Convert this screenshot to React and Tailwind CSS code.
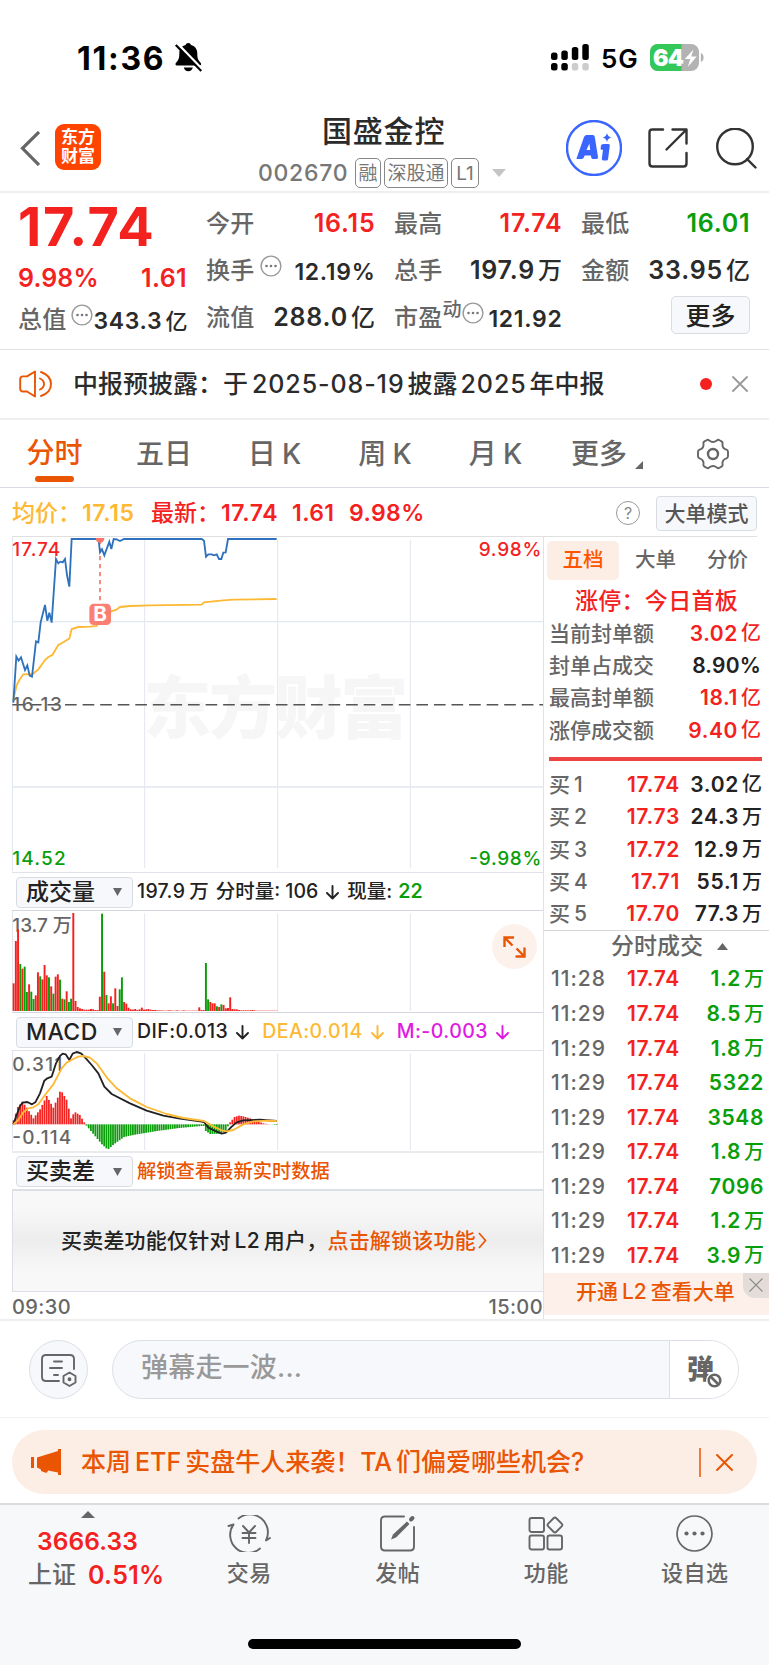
import clsx from 'clsx';

const RED = '#f4221f';
const GREEN = '#0a9e0a';
const GRID = '#e2e6ee';

const price = [
  40, 878, 49, 740, 56, 752, 63, 742, 75, 780, 82, 766, 89, 797, 96, 800, 108, 694, 115, 697, 122, 637, 135, 585,
  142, 632, 148, 608, 155, 638, 168, 447, 175, 460, 181, 455, 188, 457, 195, 447, 201, 495, 208, 530, 215, 387,
  290, 387, 296, 390, 300, 427, 306, 418, 313, 436, 328, 395, 334, 417, 341, 387, 350, 388, 360, 393, 372, 387,
  605, 387, 612, 392, 618, 440, 625, 433, 635, 433, 642, 436, 650, 433, 657, 447, 664, 447, 670, 428, 677, 427,
  684, 387, 830, 387,
];
const average = [
  40, 870, 50, 825, 60, 807, 70, 793, 98, 792, 115, 778, 135, 750, 145, 741, 157, 735, 175, 705, 190, 697,
  197, 692, 208, 686, 215, 657, 235, 651, 270, 650, 290, 648, 300, 625, 330, 605, 348, 600, 360, 591, 390, 588,
  450, 586, 605, 584, 612, 577, 640, 574, 670, 571, 700, 569, 830, 567,
];
const dif = [
  40, 793, 50, 765, 60, 738, 68, 728, 82, 726, 96, 733, 106, 727, 120, 700, 133, 662, 142, 655, 155, 650, 168, 610,
  180, 588, 188, 581, 197, 583, 208, 600, 218, 581, 230, 576, 243, 580, 255, 592, 275, 615, 295, 640, 313, 680,
  335, 702, 390, 730, 440, 752, 490, 767, 540, 776, 600, 784, 612, 786, 625, 803, 650, 815, 665, 821, 678, 818,
  695, 800, 710, 787, 730, 781, 780, 779, 830, 783,
];
const dea = [
  40, 793, 55, 780, 70, 757, 85, 745, 100, 742, 115, 733, 135, 705, 160, 673, 185, 625, 200, 608, 220, 597, 235, 590,
  250, 588, 270, 593, 290, 610, 320, 652, 350, 685, 390, 715, 440, 741, 500, 762, 550, 774, 612, 783, 640, 799,
  665, 811, 680, 814, 700, 810, 730, 793, 760, 784, 800, 782, 830, 783,
];

// positive = up minute, negative = down minute
const volume = [
  83, 210, 245, -141, 127, -133, -57, 80, -58, -36, 47, 116, -104, 95, 138, 107, -101, 74, -52, 103, 110, -94, 37, -35,
  59, -27, -37, 294, 30, 12, 8, 6, 4, 4, 4, 6, 5, 3, 3, 43, -292, 118, -48, 23, 44, -23, 68, 15, -65, -101, 27, 22, 10,
  5, 4, 6, 3, 5, 10, 4, 5, 6, 4, 3, 3, 2, 2, 2, 1, 1, 2, 2, 1, 1, 2, 1, 1, 2, 1, 1, 1, 1, 1, 1, 11, 3, 3, -144, -35,
  27, 23, 23, -14, 12, -20, 18, 8, 9, 41, 6, 5, 5, 3, 2, 2, 2, 2, 2, 3, 2, 1, 1, 1, 1, 1, 1, 1, 1, 1, 1,
];

const histKeys = [
  [0, 12], [2, 52], [4, 68], [6, 50], [9, 18], [12, 45], [15, 85], [18, 50], [20, 80], [21, 98], [22, 96], [24, 74],
  [25, 47], [26, 18], [27, 30], [28, 36], [30, 28], [32, 6], [33, -4], [35, -20], [40, -60], [42, -72], [43, -74],
  [45, -62], [50, -38], [55, -31], [65, -20], [75, -11], [85, -5], [86, -5], [87, -20], [89, -29], [93, -28], [96, -20],
  [97, -6], [98, 6], [100, 22], [102, 26], [104, 24], [107, 18], [110, 10], [113, 3], [115, 1], [119, -2],
];
const hist = Array.from({ length: 120 }, (_, i) => {
  const n = Math.max(1, histKeys.findIndex(([k]) => k >= i));
  const [x0, y0] = histKeys[n - 1];
  const [x1, y1] = histKeys[n];
  return y0 + ((y1 - y0) * (i - x0)) / (x1 - x0);
});

const levels = [
  ['1', '17.74', '3.02', '亿'],
  ['2', '17.73', '24.3', '万'],
  ['3', '17.72', '12.9', '万'],
  ['4', '17.71', '55.1', '万'],
  ['5', '17.70', '77.3', '万'],
];
const trades = [
  ['11:28', '1.2', '万'],
  ['11:29', '8.5', '万'],
  ['11:29', '1.8', '万'],
  ['11:29', '5322', ''],
  ['11:29', '3548', ''],
  ['11:29', '1.8', '万'],
  ['11:29', '7096', ''],
  ['11:29', '1.2', '万'],
  ['11:29', '3.9', '万'],
];
const limits = [
  ['当前封单额', '3.02', '亿', true],
  ['封单占成交', '8.90%', '', false],
  ['最高封单额', '18.1', '亿', true],
  ['涨停成交额', '9.40', '亿', true],
];

const Close = ({ size, color, width = 1.8 }) => (
  <svg width={size} height={size} viewBox="0 0 16 16" stroke={color} strokeWidth={width} strokeLinecap="round">
    <path d="M1 1l14 14M15 1L1 15" />
  </svg>
);

const Dots = ({ className }) => (
  <svg className={clsx('shrink-0', className)} width="22" height="22" viewBox="0 0 22 22">
    <circle cx="11" cy="11" r="9.9" fill="none" stroke="#999" strokeWidth="1.4" />
    <circle cx="6.5" cy="11" r="1.3" fill="#777" />
    <circle cx="11" cy="11" r="1.3" fill="#777" />
    <circle cx="15.5" cy="11" r="1.3" fill="#777" />
  </svg>
);

const Stat = ({ label, value, unit, color = 'text-[#2b2b2b]', children, small }) => (
  <div className="flex h-[47px] items-center justify-between">
    <div className="flex items-center text-2xl/none tracking-[0.2px] whitespace-nowrap text-[#666]">
      {label}
      {children}
    </div>
    <div
      className={clsx(
        'flex items-center gap-[3px] whitespace-nowrap',
        color,
        small ? 'pt-[3px] text-[23px]/none tracking-[0.7px]' : 'text-[25px]/none tracking-[0.8px]',
      )}
    >
      <span className={clsx('font-semibold', unit ? '' : 'mr-[-0.5px]')}>{value}</span>
      {unit && <span className={clsx('tracking-normal', small ? 'text-[22px]/none' : 'text-[24px]/none')}>{unit}</span>}
    </div>
  </div>
);

function StatusBar() {
  return (
    <div className="flex h-[108px] pt-[41px] text-black">
      <div className="mt-0.5 ml-[77px] flex h-8 w-[98px] items-center text-[32px]/none font-bold tracking-[1.7px]">11:36</div>
      <svg className="mt-0.5" width="27" height="29" viewBox="0 0 27 29">
        <path d="M2 22.5c-1.6 0-2-1.6-1-2.8 3-3.2 3.3-5.4 3.3-9.3C4.300 6 7 2.800 10.600 2c.4-1.200 1.300-2 2.700-2s2.300.8 2.700 2c3.600.8 6.300 4 6.300 8.400 0 4 .3 6 3.300 9.300 1 1.200.6 2.800-1 2.800z" />
        <path d="M8.800 24.500h9c-.5 2.200-2.200 3.800-4.500 3.800s-4-1.600-4.500-3.800z" />
        <path d="M2.800 0.800l24 25" stroke="#fff" strokeWidth="2.400" />
        <path d="M.8 2l25.500 26" stroke="#000" strokeWidth="2.200" />
      </svg>
      <svg className="mt-[3px] ml-[349px]" width="38" height="27" viewBox="0 0 38 27">
        <rect x="0" y="8.500" width="6.500" height="7.500" rx="2.500" />
        <rect x="10.300" y="6.500" width="6.500" height="9.500" rx="2.500" />
        <rect x="20.800" y="3" width="6.500" height="13" rx="2.500" />
        <rect x="31.300" y="0" width="6.500" height="16" rx="2.500" />
        <rect x="0" y="19" width="6.500" height="7.500" rx="2.500" />
        <rect x="10.300" y="19" width="6.500" height="7.500" rx="2.500" />
        <rect x="20.800" y="19" width="6.500" height="7.500" rx="2.500" fill="#ccc" />
        <rect x="31.300" y="19" width="6.500" height="7.500" rx="2.500" fill="#ccc" />
      </svg>
      <div className="ml-3 flex h-9 w-[49px] items-center text-[26px]/none font-semibold tracking-[0.8px]">5G</div>
      <svg className="mt-[3px]" width="55" height="27" viewBox="0 0 55 27">
        <defs>
          <clipPath id="battery">
            <rect width="49" height="27" rx="8" />
          </clipPath>
        </defs>
        <g clipPath="url(#battery)">
          <rect width="49" height="27" fill="#b3b3b3" />
          <rect width="31.500" height="27" fill="#34c759" />
        </g>
        <path d="M50.800 9c2 .8 2.800 2.500 2.800 4.500s-.8 3.700-2.800 4.500z" fill="#b3b3b3" />
        <text x="3" y="21.500" fontSize="23" fontWeight="900" fill="#fff" textLength="31">64</text>
        <path d="M43.500 5.500L34.800 15h5.500l-2.500 8 9-10.500h-5.600z" fill="#fff" />
      </svg>
    </div>
  );
}

function Header() {
  const tag = 'flex h-[30px] items-center justify-center rounded-[5px] border-[1.5px] border-[#888] text-[19px]/none font-normal text-[#777]';
  return (
    <div className="flex h-[85px] border-b-2 border-[#eee]">
      <svg className="mt-[23px] ml-5" width="20" height="35" viewBox="0 0 20 35" fill="none" stroke="#666" strokeWidth="3.200">
        <path d="M19 1L2.500 17.300 19 34" />
      </svg>
      <div className="mt-4 ml-[15px] flex size-[46px] flex-col items-center justify-center gap-0.5 rounded-[9px] bg-[#ff4400] text-[17px]/none font-bold text-white">
        <span>东方</span>
        <span>财富</span>
      </div>
      <div className="ml-[157px] flex w-[250px] flex-col">
        <div className="mt-2 pl-[64px] text-[30px]/none tracking-[0.8px] text-[#2b2b2b]">国盛金控</div>
        <div className="mt-3 flex items-center">
          <span className="w-[97px] text-[23px]/none tracking-[0.7px] text-[#777]">002670</span>
          <span className={clsx(tag, 'w-[26px]')}>融</span>
          <span className={clsx(tag, 'ml-[3px] w-[64px]')}>深股通</span>
          <span className={clsx(tag, 'ml-[3px] w-[28px]')}>L1</span>
          <svg className="ml-[13px]" width="14" height="8" viewBox="0 0 14 8" fill="#c4c4c4">
            <path d="M0 0h14L7 8z" />
          </svg>
        </div>
      </div>
      <svg className="mt-3 ml-[58px]" width="56" height="56" viewBox="0 0 56 56">
        <circle cx="28" cy="28" r="27" fill="none" stroke="#3a66ff" strokeWidth="2.400" />
        <path d="M10.500 38.500L18 17q.7-2 2.800-2h6q1.700 0 2 2l3.200 20q.3 2-1.700 2h-3.500q-1.400 0-1.600-1.800l-.3-1.700h-6.200l-.9 2q-.7 1.500-2.300 1.500h-3.500q-2 0-1.500-.5zM20.500 30h3.700l-.8-6.500z" fill="#3a66ff" />
        <path d="M37.500 24h5q1.500 0 1.300 1.600l-1.700 13.400q-.2 1.500-1.700 1.500h-3q-1.800 0-1.600-1.700l1.200-9h-1.500q-1 0-.9-1l.4-3.300q.2-1.500 2.500-1.500z" fill="#3a66ff" />
        <path d="M41 13q.8 3.800 4.500 4.500-3.700.8-4.500 4.500-.8-3.700-4.500-4.500Q40.200 16.800 41 13z" fill="#3a66ff" />
      </svg>
      <svg className="mt-5 ml-[26px]" width="40" height="40" viewBox="0 0 40 40" fill="none" stroke="#333" strokeWidth="2.400" strokeLinecap="round" strokeLinejoin="round">
        <path d="M15 1.500H4.500q-3 0-3 3v31q0 3 3 3h31q3 0 3-3V25" />
        <path d="M24.500 1.500h14v14M38 2L18.500 21.500" />
      </svg>
      <svg className="mt-5 ml-7" width="41" height="41" viewBox="0 0 41 41" fill="none" stroke="#333" strokeWidth="2.400" strokeLinecap="round">
        <circle cx="19" cy="18.500" r="17.800" />
        <path d="M31 31l8.500 8.500" />
      </svg>
    </div>
  );
}

function Quote() {
  return (
    <div className="flex h-[157px] border-b border-[#e2e2e2]">
      <div className="ml-[18px] w-[169px]">
        <div className="flex h-[67px] items-center text-[54px]/none font-bold tracking-[1.6px] text-[#f4221f]">17.74</div>
        <div className="flex h-9 items-center justify-between text-[25px]/none font-semibold text-[#f4221f]">
          <span className="tracking-[0.1px]">9.98%</span>
          <span className="tracking-[0.4px]">1.61</span>
        </div>
        <Stat label="总值" value="343.3" unit="亿" small>
          <Dots className="mb-2.5 ml-[5px]" />
        </Stat>
      </div>
      <div className="ml-[19px] w-[169px] pt-[7px]">
        <Stat label="今开" value="16.15" color="text-[#f4221f]" />
        <Stat label="换手" value="12.19%" small>
          <Dots className="mb-2.5 ml-1.5" />
        </Stat>
        <Stat label="流值" value="288.0" unit="亿" />
      </div>
      <div className="ml-[19px] w-[168px] pt-[7px]">
        <Stat label="最高" value="17.74" color="text-[#f4221f]" />
        <Stat label="总手" value="197.9" unit="万" />
        <Stat label="市盈" value="121.92" small>
          <span className="mb-4 text-[19px]/none">动</span>
          <Dots className="mb-2.5" />
        </Stat>
      </div>
      <div className="ml-[19px] w-[169px] pt-[7px]">
        <Stat label="最低" value="16.01" color="text-[#0a9e0a]" />
        <Stat label="金额" value="33.95" unit="亿" />
        <div className="mt-[2px] ml-auto flex h-[38px] w-[79px] items-center justify-center rounded-[5px] border border-[#d9dce3] bg-[#f7f8fb] pt-0.5 text-[25px]/none text-[#222]">
          更多
        </div>
      </div>
    </div>
  );
}

function Notice() {
  return (
    <div className="flex h-[70px] items-center border-b-2 border-[#eee]">
      <svg className="ml-[19px]" width="34" height="28" viewBox="0 0 34 28" fill="none" stroke="#ea5504" strokeWidth="1.900" strokeLinecap="round" strokeLinejoin="round">
        <path d="M16 1.500v25L8 21.500H4q-2.800 0-2.800-2.800V9.200Q1.200 6.400 4 6.400h4z" />
        <path d="M21 8.500q4 1.800 4 5.500t-4 5.500M22 2q10 3.500 10 12T22 26" />
      </svg>
      <span className="ml-5 flex-1 text-[25px]/none whitespace-nowrap text-[#2b2b2b]">
        中报预披露：于<span className="pl-1 tracking-[0.9px]">2025-08-19</span>
        <span className="px-[3px]">披露</span>
        <span className="tracking-[0.9px]">2025</span>
        <span className="pl-[3px]">年中报</span>
      </span>
      <span className="size-3 rounded-full bg-[#f4221f]" />
      <span className="mr-[21px] ml-[20px]">
        <Close size={16} color="#999" />
      </span>
    </div>
  );
}

function PeriodTabs() {
  return (
    <div className="flex h-[68px] items-center border-b border-[#d8dbe2] text-[28px]/none text-[#666]">
      <div className="flex w-[109px] flex-col items-center pt-3.5 text-[#ea5504]">
        分时
        <span className="mt-[9px] h-[6px] w-[39px] rounded-full bg-[#ea5504]" />
      </div>
      <span className="w-[110px] text-center">五日</span>
      <span className="flex w-[111px] justify-center gap-1.5">
        日<span>K</span>
      </span>
      <span className="flex w-[110px] justify-center gap-1.5">
        周<span>K</span>
      </span>
      <span className="flex w-[111px] justify-center gap-1.5">
        月<span>K</span>
      </span>
      <span className="ml-5 flex w-[72px] items-end">
        更多
        <svg className="mb-[-1px] ml-[8px] shrink-0" width="8" height="8" viewBox="0 0 8 8" fill="#666">
          <path d="M8 0v8H0z" />
        </svg>
      </span>
      <svg className="ml-[53px]" width="34" height="32" viewBox="0 0 34 32" fill="none" stroke="#666" strokeWidth="1.900" strokeLinejoin="round">
        <path d="M10.500 2.200q1.500-1 2.700.4 3.800 2.800 7.600 0 1.200-1.400 2.700-.4l2 1.200q1.500.9 1 2.600-.4 4.300 4 5.600 1.500.8 1.500 2.200v4.400q0 1.400-1.500 2.200-4.400 1.300-4 5.600.5 1.700-1 2.600l-2 1.200q-1.500 1-2.700-.4-3.800-2.800-7.600 0-1.200 1.400-2.700.4l-2-1.200q-1.500-.9-1-2.600.4-4.300-4-5.600Q2 19.600 2 18.200v-4.400q0-1.400 1.500-2.200 4.400-1.300 4-5.600-.5-1.700 1-2.600z" />
        <circle cx="17" cy="16" r="5" strokeWidth="2.400" />
      </svg>
    </div>
  );
}

function Summary() {
  return (
    <div className="mr-3 ml-3 flex h-[49px] items-center border-b border-[#e0e0e0] pt-0.5 text-[23px]/none whitespace-nowrap text-[#f4221f]">
      <span className="w-[139px] text-[#fdb933]">
        均价：<span className="ml-px font-semibold tracking-[0.6px]">17.15</span>
      </span>
      <span className="w-[141px]">
        最新：<span className="ml-px font-semibold tracking-[0.6px]">17.74</span>
      </span>
      <span className="w-[57px] font-semibold tracking-[0.4px]">1.61</span>
      <span className="font-semibold tracking-[0.4px]">9.98%</span>
      <span className="mr-4 ml-auto flex size-6 items-center justify-center rounded-full border-[1.5px] border-[#999] text-[16px]/none font-normal text-[#888]">?</span>
      <span className="flex h-[35px] w-[101px] items-center justify-center rounded-[4px] border border-[#d9dce3] bg-[#f7f8fb] text-[21px]/none text-[#555]">
        大单模式
      </span>
    </div>
  );
}

const PriceChart = () => (
  <svg className="block border-b border-[#dfe2e8]" width="531" height="336" viewBox="36 381 1593 1005" fill="none">
    <text x="430" y="970" fontSize="204" fontWeight="900" fill="#f6f6f6" textLength="795">东方财富</text>
    <path d="M37.500 381V1383M434 390V1374M833 390V1374M1231 390V1374" stroke={GRID} strokeWidth="3" />
    <path d="M37 635H1629M37 1131H1629" stroke={GRID} strokeWidth="4" />
    <path d="M37 884H1629" stroke="#555" strokeWidth="4.500" strokeDasharray="35 17.700" />
    <text x="37" y="903" fontSize="57" fill="#666" textLength="149">16.13</text>
    <path d="M300 390V580" stroke="#fb7568" strokeWidth="5" strokeDasharray="13 11" />
    <polyline points={average.join(' ')} stroke="#fdb933" strokeWidth="5.500" />
    <polyline points={price.join(' ')} stroke="#2e72bd" strokeWidth="5.500" />
    <path d="M287 384a13 15 0 0 0 26 0z" fill="#fb7568" />
    <text x="37" y="437" fontSize="57" fill={RED} textLength="144">17.74</text>
    <text x="1624" y="437" fontSize="57" fill={RED} textLength="188" textAnchor="end">9.98%</text>
    <text x="37" y="1364" fontSize="57" fill={GREEN} textLength="160">14.52</text>
    <text x="1624" y="1364" fontSize="57" fill={GREEN} textLength="216" textAnchor="end">-9.98%</text>
    <rect x="268" y="581" width="65" height="64" rx="13" fill="#fb7568" fillOpacity=".92" />
    <text x="300" y="634" fontSize="62" fontWeight="700" fill="#fff" textAnchor="middle">B</text>
  </svg>
);

const VolumeChart = () => (
  <svg className="block border-b border-[#d3d6dd]" width="531" height="102" viewBox="36 153 1593 303" fill="none">
    <path d="M37.500 153V453M434 160V453M833 160V453M1231 160V453" stroke={GRID} strokeWidth="3" />
    <text x="37" y="216" fontSize="57" fill="#666" textLength="178">13.7 万</text>
    {volume.map((v, i) => (
      <rect key={i} x={38 + i * 6.63} y={453 - Math.abs(v)} width="5.800" height={Math.abs(v)} fill={v > 0 ? RED : GREEN} />
    ))}
  </svg>
);

const MacdChart = () => (
  <svg className="block border-b-2 border-[#e9ebef]" width="531" height="102" viewBox="36 573 1593 300" fill="none">
    <path d="M37.500 573V870M434 580V870M833 580V870M1231 580V870" stroke={GRID} strokeWidth="3" />
    <text x="37" y="634" fontSize="57" fill="#666" textLength="150">0.311</text>
    <text x="37" y="851" fontSize="57" fill="#666" textLength="177">-0.114</text>
    {hist.map((v, i) => (
      <rect key={i} x={38 + i * 6.63} y={v > 0 ? 793 - v : 793} width="5.300" height={Math.abs(v)} fill={v > 0 ? RED : GREEN} />
    ))}
    <polyline points={dif.join(' ')} stroke="#222" strokeWidth="5.500" strokeLinejoin="round" />
    <polyline points={dea.join(' ')} stroke="#fdb933" strokeWidth="5.500" strokeLinejoin="round" />
  </svg>
);

const Picker = ({ children }) => (
  <div className="mr-[4px] ml-1 flex h-[31px] w-[117px] shrink-0 items-center justify-between rounded-[4px] border border-[#d9dce3] bg-[#f7f8fb] pr-[10px] pl-[9px] text-[23px]/none text-[#222]">
    {children}
    <svg width="9" height="8" viewBox="0 0 9 8" fill="#666">
      <path d="M0 0h9L4.500 8z" />
    </svg>
  </div>
);

const Down = ({ className }) => (
  <svg className={clsx('shrink-0', className)} width="13" height="15" viewBox="0 0 13 15" fill="none" stroke="currentColor" strokeWidth="1.900" strokeLinecap="round" strokeLinejoin="round">
    <path d="M6.500 1v12.500M1 8l5.500 5.500L12 8" />
  </svg>
);

function Charts() {
  return (
    <div className="ml-3 w-[532px] border-r border-[#dfe2e8] whitespace-nowrap">
      <PriceChart />
      <div className="flex h-[38px] items-center border-b border-[#d3d6dd] pt-px text-[19.500px]/none text-[#222]">
        <Picker>成交量</Picker>
        <span className="tracking-[0.3px]">197.9</span>
        <span className="ml-1">万</span>
        <span className="ml-[7px]">分时量: 106</span>
        <Down className="mx-2" />
        <span>现量: </span>
        <span className="ml-1.5 font-semibold text-[#0a9e0a]">22</span>
      </div>
      <div className="relative">
        <VolumeChart />
        <span className="absolute top-[13px] right-[6px] flex size-[45px] items-center justify-center rounded-full bg-[#fdf1eb]">
          <svg width="23" height="22" viewBox="0 0 23 22" fill="none" stroke="#ea5504" strokeWidth="2.400">
            <path d="M1.500 11V1.500H11M2 2l7.500 7.500M21.500 11.500V20.500H12.500M21 20l-7.500-7.500" />
          </svg>
        </span>
      </div>
      <div className="flex h-[38px] items-center border-b border-[#dfe2e8] pt-px text-[19.500px]/none tracking-[0.45px] text-[#222]">
        <Picker>MACD</Picker>
        DIF:0.013
        <Down className="mr-[13px] ml-2" />
        <span className="flex items-center text-[#fdb933]">
          DEA:0.014
          <Down className="mr-[13px] ml-2" />
        </span>
        <span className="flex items-center text-[#e01ae0]">
          M:-0.003
          <Down className="ml-2" />
        </span>
      </div>
      <MacdChart />
      <div className="flex h-[38px] items-center border-b-2 border-[#dcdfe5] pt-px text-[19.300px]/none text-[#ea5504]">
        <Picker>买卖差</Picker>
        解锁查看最新实时数据
      </div>
      <div className="flex h-[101px] items-center justify-center border-b border-l border-[#dcdfe5] bg-[#f8f8f8] pb-0.5">
        <div className="flex h-16 w-full items-center bg-gradient-to-b from-[#f8f8f8] via-[#ededed] to-[#f8f8f8] pl-12 text-[21px]/none tracking-[0.2px] text-[#222]">
          买卖差功能仅针对<span className="px-1">L2</span>用户，<span className="text-[#ea5504]">点击解锁该功能</span>
          <svg className="ml-0.5" width="9" height="17" viewBox="0 0 9 17" fill="none" stroke="#ea5504" strokeWidth="1.700">
            <path d="M1 1l6.500 7.500L1 16" />
          </svg>
        </div>
      </div>
      <div className="flex h-[27px] items-center justify-between pt-[3px] text-[20px]/none tracking-[0.4px] text-[#666]">
        <span>09:30</span>
        <span>15:00</span>
      </div>
    </div>
  );
}

function OrderBook() {
  return (
    <div className="flex w-[225px] flex-col whitespace-nowrap">
      <div className="mt-1 ml-[3px] flex h-[39px] items-center text-[20.500px]/none text-[#666]">
        <span className="flex h-full w-[72px] items-center justify-center rounded-[5px] bg-[#fdeee5] text-[#ff5500]">五档</span>
        <span className="ml-4 w-[72px]">大单</span>
        <span>分价</span>
      </div>
      <div className="flex h-[37px] items-center justify-center pt-1.5 text-[23px]/none tracking-[0.3px] text-[#f4221f]">涨停：今日首板</div>
      <div className="pr-2 pl-[5px] text-[21px]/none text-[#666]">
        {limits.map(([label, value, unit, hot]) => (
          <div key={label} className="flex h-[32.300px] items-center">
            {label}
            <span className={clsx('ml-auto font-semibold', hot ? 'tracking-[0.6px] text-[#f4221f]' : 'tracking-[0.2px] text-[#222]')}>{value}</span>
            {unit && <span className="pl-[3px] text-[20px]/none text-[#f4221f]">{unit}</span>}
          </div>
        ))}
      </div>
      <div className="mt-[11px] mr-[7px] ml-[5px] h-[4px] bg-[#ee4444]" />
      <div className="mt-[7px] h-[163px] border-b border-[#d8d8d8] pr-[7px] pl-[5px] text-[21px]/none">
        {levels.map(([n, value, amount, unit]) => (
          <div key={n} className="flex h-[32.400px] items-center text-[#222]">
            <span className="w-[60px] text-[#666]">
              买<span className="ml-1">{n}</span>
            </span>
            <span className="w-[71px] text-right font-semibold tracking-[0.7px] text-[#f4221f]">{value}</span>
            <span className="ml-auto font-semibold tracking-[0.7px]">{amount}</span>
            <span className="pl-[3px] text-[20px]/none">{unit}</span>
          </div>
        ))}
      </div>
      <div className="flex h-[30.500px] items-center pl-[67px] text-[23px]/none text-[#666]">
        分时成交
        <svg className="ml-3.5" width="11" height="7" viewBox="0 0 11 7" fill="#666">
          <path d="M0 7h11L5.500 0z" />
        </svg>
      </div>
      <div className="pr-[5px] pl-[7px] text-[21px]/none">
        {trades.map(([time, amount, unit], i) => (
          <div key={i} className="flex h-[34.550px] items-center text-[#0a9e0a]">
            <span className="w-[60px] tracking-[1px] text-[#666]">{time}</span>
            <span className="w-[69px] text-right font-semibold tracking-[0.7px] text-[#f4221f]">17.74</span>
            <span className="ml-auto font-semibold tracking-[0.6px]">{amount}</span>
            {unit && <span className="pl-[3px] text-[20px]/none">{unit}</span>}
          </div>
        ))}
      </div>
      <div className="flex h-[42px] items-start justify-between bg-[#fdf0ea] pl-8">
        <span className="flex h-[38px] items-center text-[21px]/none text-[#ea5504]">
          开通<span className="px-1">L2</span>查看大单
        </span>
        <span className="flex h-[25px] w-[26px] items-center justify-center rounded-bl-xl bg-[#e3dcd8]">
          <Close size={14} color="#888" width={1.5} />
        </span>
      </div>
    </div>
  );
}

function CommentBar() {
  return (
    <div className="flex h-[97px] items-center border-b border-[#f1f1f1]">
      <div className="ml-[29px] flex size-[59px] items-center justify-center rounded-full border border-[#dcdfe5] bg-[#f7f8fb]">
        <svg className="mt-0.5 ml-0.5" width="37" height="33" viewBox="0 0 37 33" fill="none" stroke="#666" strokeWidth="1.900" strokeLinecap="round" strokeLinejoin="round">
          <path d="M33 15V5q0-4-4-4H5Q1 1 1 5v18q0 4 4 4h13M13 7.500h8M9 14h12M13 21h4" />
          <path d="M28.500 18.500l6 3.500v6.500l-6 3.500-6-3.500V22z" />
          <circle cx="28.500" cy="25.200" r="1" fill="#666" />
        </svg>
      </div>
      <div className="ml-[24px] flex h-[59px] w-[627px] items-center overflow-hidden rounded-full border border-[#dcdfe5] bg-[#f7f8fb]">
        <span className="flex-1 pb-1 pl-[28px] text-[27px]/none tracking-[0.2px] text-[#999]">弹幕走一波...</span>
        <div className="flex h-full w-[69px] items-center border-l border-[#dcdfe5] bg-white pl-[17px]">
          <div className="relative text-[27px]/none font-black text-[#666]">
            弹
            <svg className="absolute top-[16px] left-[19px]" width="17" height="17" viewBox="0 0 17 17">
              <circle cx="8.500" cy="8.500" r="8.500" fill="#fff" />
              <circle cx="8.500" cy="8.500" r="5.800" fill="#fff" stroke="#666" strokeWidth="2.600" />
              <path d="M4.500 4.500l8 8" stroke="#666" strokeWidth="2.600" />
            </svg>
          </div>
        </div>
      </div>
    </div>
  );
}

function Promo() {
  return (
    <div className="mx-3 mt-3 flex h-16 items-center rounded-full bg-[#fdeee5] text-[#ea5504]">
      <svg className="ml-[19px]" width="30" height="26" viewBox="0 0 30 26" fill="#ea5504">
        <path d="M0 8h3v11H0zM6 8.500L27 2V0h3v26h-3v-2.500l-10-2q-.5 3-3 2l-4-1.500v-1.500L6 18.500z" />
      </svg>
      <span className="ml-5 flex-1 text-[25px]/none whitespace-nowrap">
        本周<span className="px-1">ETF</span>实盘牛人来袭！<span className="pr-1">TA</span>们偏爱哪些机会?
      </span>
      <span className="h-[29px] w-0.5 bg-[#ee7a3c]" />
      <span className="mr-6 ml-[15px]">
        <Close size={17} color="#ea5504" width={1.9} />
      </span>
    </div>
  );
}

function BottomBar() {
  const item = 'flex w-[148.500px] flex-col items-center gap-[10px] pt-[10px] text-[22px]/none tracking-[0.5px]';
  return (
    <div className="mt-[9px] h-[162px] border-t-2 border-[#dadcdf] bg-[#f7f8fa] text-[#666]">
      <div className="flex h-[134px]">
        <div className="w-[175px] pt-[6px] pl-[28px]">
          <svg className="ml-[53px]" width="14" height="7" viewBox="0 0 14 7" fill="#666">
            <path d="M0 7h14L7 0z" />
          </svg>
          <div className="mt-[11px] ml-[9px] text-[24.500px]/none font-semibold tracking-[0.1px] text-[#f4221f]">3666.33</div>
          <div className="mt-[9px] flex items-center gap-3 text-[25px]/none">
            <span className="text-2xl/none">上证</span>
            <span className="font-semibold tracking-[0.3px] text-[#f4221f]">0.51%</span>
          </div>
        </div>
        <div className={item}>
          <svg width="44" height="37" viewBox="0 0 44 37" fill="none" stroke="#666" strokeWidth="1.900" strokeLinecap="round" strokeLinejoin="round">
            <path d="M11.500 3.500A18 18 0 0 1 39 25.500l4-2.500M33 33.500A18 18 0 0 1 6.500 9.500L1.500 11" />
            <path d="M16 11l6 6.500 6-6.500M22 17.500V28M15.500 18h13M15.500 23h13" />
          </svg>
          交易
        </div>
        <div className={item}>
          <svg width="36" height="37" viewBox="0 0 36 37" fill="none" stroke="#666" strokeWidth="1.900" strokeLinecap="round">
            <path d="M24 1.500H5Q1 1.500 1 5.500v26q0 4 4 4h25q4 0 4-4V12" />
            <path d="M11 24.500l2-5L27 6.500l2.500 2.500L16 22.500z" fill="#666" stroke="none" />
            <path d="M31 4.500l1.500-1.500" strokeWidth="4" />
          </svg>
          发帖
        </div>
        <div className={item}>
          <svg width="36" height="37" viewBox="0 0 36 37" fill="none" stroke="#666" strokeWidth="1.900">
            <rect x="1.500" y="3" width="14.500" height="14" rx="2" />
            <rect x="1.500" y="20.500" width="14.500" height="14" rx="2" />
            <rect x="19.500" y="20.500" width="14.500" height="14" rx="2" />
            <rect x="21.200" y="4.300" width="11.500" height="11.500" rx="2" transform="rotate(45 27 10)" />
          </svg>
          功能
        </div>
        <div className={item}>
          <svg width="37" height="37" viewBox="0 0 37 37" fill="#666">
            <circle cx="18.500" cy="18.500" r="17.500" fill="none" stroke="#666" strokeWidth="1.700" />
            <circle cx="10.500" cy="18.500" r="2.100" />
            <circle cx="18.500" cy="18.500" r="2.100" />
            <circle cx="26.500" cy="18.500" r="2.100" />
          </svg>
          设自选
        </div>
      </div>
      <div className="ml-[248px] h-[10px] w-[273px] rounded-full bg-black" />
    </div>
  );
}

export default function App() {
  return (
    <div className="h-[1665px] w-[769px] overflow-hidden bg-white font-['Inter','Noto_Sans_CJK_SC',sans-serif] font-medium">
      <StatusBar />
      <Header />
      <Quote />
      <Notice />
      <PeriodTabs />
      <Summary />
      <div className="flex h-[784px] border-b-2 border-[#eee]">
        <Charts />
        <OrderBook />
      </div>
      <CommentBar />
      <Promo />
      <BottomBar />
    </div>
  );
}
